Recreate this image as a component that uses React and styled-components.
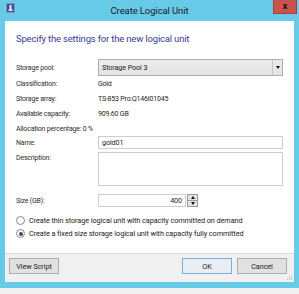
import React from 'react';
import styled, { createGlobalStyle } from 'styled-components';

const GlobalStyle = createGlobalStyle`
  html, body {
    margin: 0;
    background: #f0f0f0;
  }
  body {
    font-family: Roboto, "Liberation Sans", sans-serif;
  }
  * { box-sizing: border-box; }
`;

// Okno dialogu s modrým rámem
const Window = styled.div`
  width: 299px;
  height: 288px;
  background: #68cae9;
  padding: 0 5px 6px;
  display: flex;
  flex-direction: column;
`;

const TitleBar = styled.div`
  height: 21px;
  display: grid;
  grid-template-columns: 1fr auto 1fr;
  align-items: start;
`;

const AppIcon = styled.svg`
  margin-top: 3px;
  margin-left: 1px;
  display: block;
`;

const Title = styled.div`
  font-size: 9.5px;
  line-height: 21px;
  color: #1a1a1a;
  letter-spacing: -0.1px;
`;

const CloseButton = styled.div`
  justify-self: end;
  margin-right: -3px;
  width: 24px;
  height: 14px;
  background: #c8534c;
  border: 1px solid #a8403a;
  border-top: none;
  display: flex;
  align-items: center;
  justify-content: center;
  color: #111;
  font-weight: bold;
  font-size: 9px;
  line-height: 1;
`;

const Content = styled.div`
  background: #fff;
  height: 232px;
  padding: 11px 11px 0;
  display: flex;
  flex-direction: column;
`;

const Heading = styled.div`
  color: #3b3b98;
  font-size: 9.5px;
  line-height: 14px;
  letter-spacing: -0.18px;
  margin-bottom: 13px;
`;

const Row = styled.div`
  display: grid;
  grid-template-columns: 82px 185px;
  align-items: ${(p) => (p.$top ? 'start' : 'center')};
  height: ${(p) => p.$h}px;
  margin-top: ${(p) => p.$mt || 0}px;
`;

const Label = styled.div`
  font-size: 7px;
  letter-spacing: -0.2px;
  color: #2e2e2e;
  line-height: 10px;
  white-space: nowrap;
  padding-top: ${(p) => p.$pt || 0}px;
`;

const Value = styled(Label)`
  color: #1e1e1e;
`;

const Select = styled.div`
  height: 17px;
  border: 1px solid #acacac;
  background: linear-gradient(#ececec, #e3e3e3);
  display: flex;
  align-items: stretch;
`;

const SelectText = styled.div`
  flex: 1;
  font-size: 7.2px;
  letter-spacing: -0.1px;
  color: #1e1e1e;
  padding-left: 3px;
  display: flex;
  align-items: center;
`;

const SelectArrow = styled.div`
  width: 10px;
  border-left: 1px solid #c4c4c4;
  display: flex;
  align-items: center;
  justify-content: center;

  &::after {
    content: '';
    border-left: 2.5px solid transparent;
    border-right: 2.5px solid transparent;
    border-top: 3px solid #111;
  }
`;

const TextInput = styled.div`
  height: ${(p) => p.$h}px;
  width: ${(p) => p.$w || 185}px;
  border: 1px solid #cdcdcd;
  background: #fff;
  font-size: 7.2px;
  letter-spacing: -0.1px;
  color: #1e1e1e;
  padding: 0 3px;
  display: flex;
  align-items: center;
  justify-content: ${(p) => (p.$right ? 'flex-end' : 'flex-start')};
`;

const SizeField = styled.div`
  display: flex;
  align-items: center;
  gap: 1px;
`;

const Spinner = styled.div`
  width: 11px;
  height: 13px;
  border: 1px solid #9a9a9a;
  display: flex;
  flex-direction: column;
`;

const SpinHalf = styled.div`
  flex: 1;
  background: #e4e4e4;
  display: flex;
  align-items: center;
  justify-content: center;
  border-top: ${(p) => (p.$down ? '1px solid #9a9a9a' : 'none')};

  &::after {
    content: '';
    border-left: 2.5px solid transparent;
    border-right: 2.5px solid transparent;
    ${(p) => (p.$down ? 'border-top: 3px solid #111;' : 'border-bottom: 3px solid #111;')}
  }
`;

const RadioRow = styled.div`
  display: flex;
  align-items: center;
  gap: 4px;
  height: 13px;
  margin-top: ${(p) => p.$mt || 0}px;
`;

const RadioDot = styled.div`
  width: 9px;
  height: 9px;
  border-radius: 50%;
  border: 1px solid #8a8a8a;
  background: #fff;
  display: flex;
  align-items: center;
  justify-content: center;

  &::after {
    content: '';
    display: ${(p) => (p.$on ? 'block' : 'none')};
    width: 4px;
    height: 4px;
    border-radius: 50%;
    background: #3d4c6a;
  }
`;

const RadioText = styled.div`
  font-size: 7.3px;
  letter-spacing: -0.08px;
  color: #222;
  white-space: nowrap;
`;

const Footer = styled.div`
  height: 29px;
  background: #f0f0f0;
  border-top: 1px solid #dcdcdc;
  display: flex;
  gap: 5px;
  padding: 4px 7px 0 4px;
  position: relative;
`;

const Button = styled.div`
  width: 50px;
  height: 16px;
  border: 1px solid ${(p) => (p.$default ? '#7aaee0' : '#adadad')};
  background: ${(p) => (p.$default ? '#e8eef4' : '#e1e1e1')};
  font-size: 7.3px;
  letter-spacing: -0.1px;
  color: #1e1e1e;
  display: flex;
  align-items: center;
  justify-content: center;
  margin-left: ${(p) => (p.$push ? 'auto' : '0')};
`;

const Grip = styled.svg`
  position: absolute;
  right: 1px;
  bottom: 1px;
`;

const App = () => {
  return (
    <>
      <GlobalStyle />
      <Window>
        <TitleBar>
          <AppIcon width="9" height="10" viewBox="0 0 9 10">
            <rect x="0" y="0" width="9" height="10" fill="#3a5597" />
            <rect x="0.5" y="0.5" width="8" height="9" fill="none" stroke="#7f95c4" />
            <rect x="3.5" y="2" width="2" height="5" fill="#e8eef8" />
            <rect x="2.5" y="6.5" width="4" height="1.5" fill="#e8eef8" />
          </AppIcon>
          <Title>Create Logical Unit</Title>
          <CloseButton>x</CloseButton>
        </TitleBar>
        <Content>
          <Heading>Specify the settings for the new logical unit</Heading>
          <Row $h={17}>
            <Label>Storage pool:</Label>
            <Select>
              <SelectText>Storage Pool 3</SelectText>
              <SelectArrow />
            </Select>
          </Row>
          <Row $h={15}>
            <Label>Classification:</Label>
            <Value>Gold</Value>
          </Row>
          <Row $h={15}>
            <Label>Storage array:</Label>
            <Value>TS-853 Pro:Q146I01045</Value>
          </Row>
          <Row $h={15}>
            <Label>Available capacity:</Label>
            <Value>909.60 GB</Value>
          </Row>
          <Row $h={15}>
            <Label>Allocation percentage: 0 %</Label>
          </Row>
          <Row $h={13}>
            <Label>Name:</Label>
            <TextInput $h={13}>gold01</TextInput>
          </Row>
          <Row $h={34} $mt={3} $top>
            <Label $pt={1}>Description:</Label>
            <TextInput $h={34} />
          </Row>
          <Row $h={13} $mt={8}>
            <Label>Size (GB):</Label>
            <SizeField>
              <TextInput $h={13} $w={88} $right>400</TextInput>
              <Spinner>
                <SpinHalf />
                <SpinHalf $down />
              </Spinner>
            </SizeField>
          </Row>
          <RadioRow $mt={7}>
            <RadioDot />
            <RadioText>Create thin storage logical unit with capacity committed on demand</RadioText>
          </RadioRow>
          <RadioRow>
            <RadioDot $on />
            <RadioText>Create a fixed size storage logical unit with capacity fully committed</RadioText>
          </RadioRow>
        </Content>
        <Footer>
          <Button>View Script</Button>
          <Button $default $push>OK</Button>
          <Button>Cancel</Button>
          <Grip width="6" height="6" viewBox="0 0 6 6">
            <rect x="4" y="0" width="1" height="1" fill="#b5b5b5" />
            <rect x="2" y="2" width="1" height="1" fill="#b5b5b5" />
            <rect x="4" y="2" width="1" height="1" fill="#b5b5b5" />
            <rect x="0" y="4" width="1" height="1" fill="#b5b5b5" />
            <rect x="2" y="4" width="1" height="1" fill="#b5b5b5" />
            <rect x="4" y="4" width="1" height="1" fill="#b5b5b5" />
          </Grip>
        </Footer>
      </Window>
    </>
  );
};

export default App;
